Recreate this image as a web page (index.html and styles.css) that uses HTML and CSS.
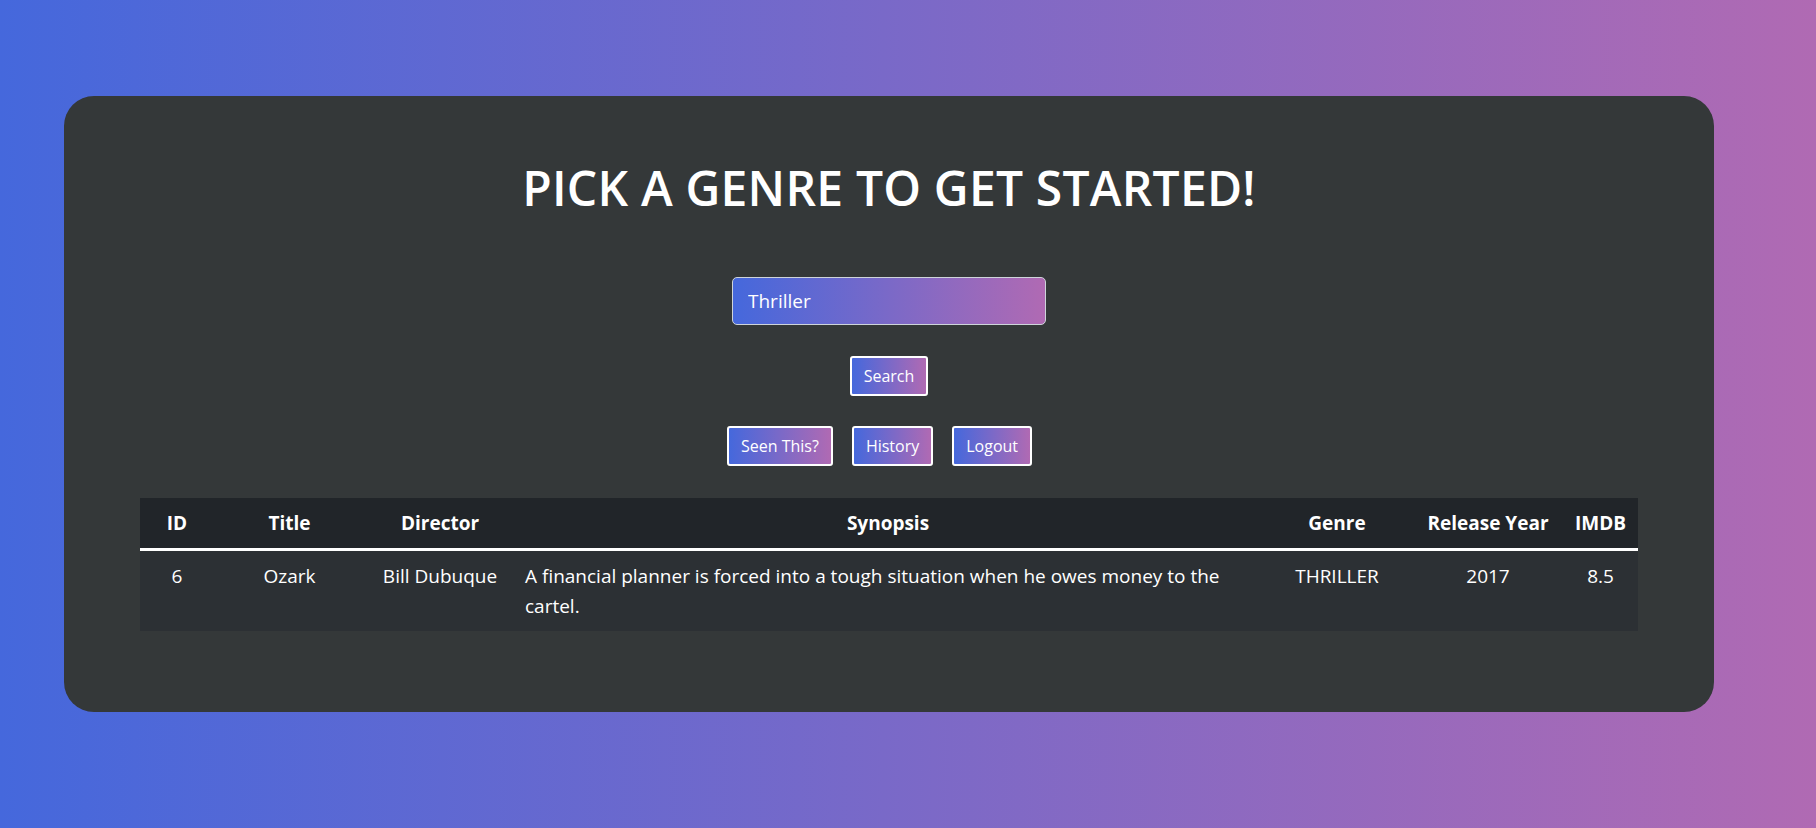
FILE: index.html
```html
<!DOCTYPE html>
<html lang="en">
<head>
<meta charset="utf-8">
<title>Pick a genre</title>
<link rel="stylesheet" href="styles.css">
</head>
<body>
<main class="card">
  <h1 class="title">PICK A GENRE TO GET STARTED!</h1>
  <form class="search-form">
    <input class="genre-input" type="text" value="Thriller">
    <button class="btn btn-search" type="button">Search</button>
  </form>
  <nav class="actions">
    <button class="btn btn-seen" type="button">Seen This?</button>
    <button class="btn btn-history" type="button">History</button>
    <button class="btn btn-logout" type="button">Logout</button>
  </nav>
  <table class="movies">
    <colgroup>
      <col class="c-id"><col class="c-title"><col class="c-director"><col class="c-synopsis"><col class="c-genre"><col class="c-year"><col class="c-imdb">
    </colgroup>
    <thead>
      <tr><th>ID</th><th>Title</th><th>Director</th><th>Synopsis</th><th>Genre</th><th>Release Year</th><th>IMDB</th></tr>
    </thead>
    <tbody>
      <tr>
        <td>6</td>
        <td>Ozark</td>
        <td>Bill Dubuque</td>
        <td class="synopsis">A financial planner is forced into a tough situation when he owes money to the cartel.</td>
        <td>THRILLER</td>
        <td>2017</td>
        <td>8.5</td>
      </tr>
    </tbody>
  </table>
</main>
</body>
</html>
```
FILE: styles.css
```css
html, body {
  height: 100%;
}
body {
  margin: 0;
  box-sizing: border-box;
  padding: 96px 102px 0 64px;
  background: linear-gradient(to right, #4568dc, #b06ab3);
  font-family: "Open Sans", "Noto Sans", sans-serif;
  color: #fff;
  overflow: hidden;
}
.card {
  background: #343839;
  border-radius: 30px;
  padding: 63px 76px 81px;
}
.title {
  margin: 0 0 60px;
  text-align: center;
  font-size: 48px;
  line-height: 58px;
  font-weight: 600;
  letter-spacing: 0.2px;
  color: #fff;
}
.search-form {
  display: flex;
  flex-direction: column;
  align-items: center;
  gap: 31px;
  margin: 0 0 30px;
}
.genre-input {
  box-sizing: border-box;
  width: 314px;
  height: 48px;
  padding: 0 15px;
  border: 1px solid #ced4da;
  border-radius: 5px;
  background: linear-gradient(to right, #4568dc, #b06ab3);
  color: #fff;
  font-family: inherit;
  font-size: 19px;
  outline: none;
}
.btn {
  box-sizing: border-box;
  height: 40px;
  padding: 0 12px;
  border: 2px solid #fff;
  border-radius: 3px;
  background: linear-gradient(to right, #4568dc, #b06ab3);
  color: #fff;
  font-family: inherit;
  font-size: 16px;
  line-height: 24px;
  cursor: pointer;
}
.actions {
  display: flex;
  justify-content: center;
  margin: 0 0 32px;
}
.actions .btn {
  margin-right: 19px;
}
.movies {
  width: 100%;
  border-collapse: collapse;
  table-layout: fixed;
  font-size: 19px;
  line-height: 30px;
}
.c-id { width: 74px; }
.c-title { width: 151px; }
.c-director { width: 150px; }
.c-genre { width: 152px; }
.c-year { width: 150px; }
.c-imdb { width: 75px; }
.movies th {
  background: #212529;
  padding: 10px 4px;
  border-bottom: 3px solid #fff;
  font-weight: 700;
  text-align: center;
  white-space: nowrap;
}
.movies td {
  background: #2c3034;
  padding: 10px;
  text-align: center;
  vertical-align: top;
}
.movies td.synopsis {
  text-align: left;
}
```
